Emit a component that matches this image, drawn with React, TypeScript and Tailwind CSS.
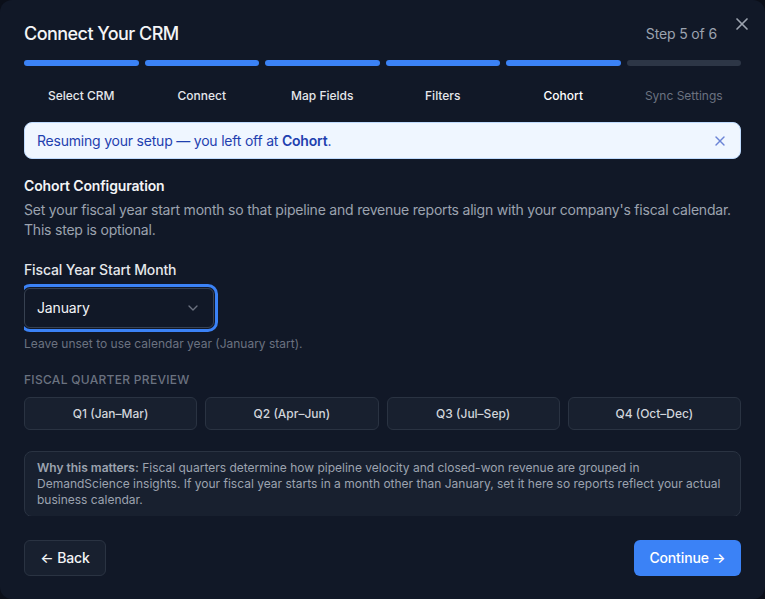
import React from "react";

const steps = [
  { label: "Select CRM", state: "done" },
  { label: "Connect", state: "done" },
  { label: "Map Fields", state: "done" },
  { label: "Filters", state: "done" },
  { label: "Cohort", state: "current" },
  { label: "Sync Settings", state: "todo" },
];

const quarters = ["Q1 (Jan–Mar)", "Q2 (Apr–Jun)", "Q3 (Jul–Sep)", "Q4 (Oct–Dec)"];

function XIcon({ size, className }: { size: number; className?: string }) {
  return (
    <svg
      width={size}
      height={size}
      viewBox="0 0 24 24"
      fill="none"
      stroke="currentColor"
      strokeWidth={2}
      strokeLinecap="round"
      strokeLinejoin="round"
      className={className}
    >
      <path d="M18 6 6 18" />
      <path d="m6 6 12 12" />
    </svg>
  );
}

export default function App() {
  return (
    <div className="w-[765px] h-[599px] bg-[#0b0f19] font-['Inter',sans-serif]">
      <div className="relative w-[765px] h-[599px] flex flex-col rounded-xl bg-[#111827]">
        <button className="absolute top-[14px] right-[13px] w-5 h-5 text-[#9ca3af]">
          <XIcon size={20} />
        </button>

        <div className="px-6 pt-5">
          <div className="flex items-center justify-between pr-6">
            <h1 className="text-[18px] leading-7 font-medium tracking-[-0.03em] text-[#f3f4f6]">Connect Your CRM</h1>
            <span className="text-sm leading-5 tracking-[-0.01em] text-[#9ca3af]">Step 5 of 6</span>
          </div>

          <div className="mt-3 flex gap-1.5">
            {steps.map((s) => (
              <div
                key={s.label}
                className={
                  s.state === "todo"
                    ? "flex-1 h-1.5 rounded-full bg-[#2d3646]"
                    : "flex-1 h-1.5 rounded-full bg-[#3b82f6]"
                }
              />
            ))}
          </div>

          <div className="mt-[22px] flex gap-1.5">
            {steps.map((s) => (
              <div
                key={s.label}
                className={
                  s.state === "todo"
                    ? "flex-1 text-center text-xs leading-4 text-[#6b7280]"
                    : s.state === "current"
                    ? "flex-1 text-center text-xs leading-4 font-medium text-white"
                    : "flex-1 text-center text-xs leading-4 font-medium text-[#e5e7eb]"
                }
              >
                {s.label}
              </div>
            ))}
          </div>
        </div>

        <div className="px-6 flex-1 min-h-0">
          <div className="overflow-y-auto h-full">
            <div className="mt-[18px] flex items-center justify-between h-[37px] rounded-lg bg-[#eff6ff] border border-[#bfdbfe] px-3">
              <p className="text-sm leading-5 tracking-[-0.015em] text-[#1e40af]">
                Resuming your setup — you left off at <span className="font-semibold">Cohort</span>.
              </p>
              <XIcon size={16} className="text-[#6b83d6]" />
            </div>

            <h2 className="mt-[17px] text-sm leading-5 font-semibold tracking-[-0.01em] text-[#f3f4f6]">
              Cohort Configuration
            </h2>
            <p className="mt-1 text-sm leading-5 tracking-[-0.015em] text-[#9ca3af]">
              Set your fiscal year start month so that pipeline and revenue reports align with your company's fiscal
              calendar. This step is optional.
            </p>

            <div className="mt-5 text-sm leading-5 font-medium tracking-[-0.01em] text-[#e5e7eb]">
              Fiscal Year Start Month
            </div>

            <div className="mt-2 w-[190px] h-10 rounded-md border border-[#374151] bg-[#111827] flex items-center justify-between pl-3 pr-3 ring-[3px] ring-[#3b82f6] ring-offset-1 ring-offset-[#111827]">
              <span className="text-sm tracking-[-0.01em] text-[#f3f4f6]">January</span>
              <svg
                width={16}
                height={16}
                viewBox="0 0 24 24"
                fill="none"
                stroke="currentColor"
                strokeWidth={2}
                strokeLinecap="round"
                strokeLinejoin="round"
                className="text-[#6b7280]"
              >
                <path d="m6 9 6 6 6-6" />
              </svg>
            </div>

            <p className="mt-2 text-xs leading-4 text-[#6b7280]">Leave unset to use calendar year (January start).</p>

            <div className="mt-5 text-xs leading-4 font-medium uppercase tracking-wide text-[#6b7280]">
              Fiscal Quarter Preview
            </div>

            <div className="mt-[9px] grid grid-cols-4 gap-2">
              {quarters.map((q) => (
                <div
                  key={q}
                  className="h-[33px] flex items-center justify-center rounded-md border border-[#2a3342] bg-[#18202f] text-xs font-medium text-[#d1d5db]"
                >
                  {q}
                </div>
              ))}
            </div>

            <div className="mt-[21px] rounded-lg border border-[#2a3342] bg-[#18202f] px-3 py-2 text-xs leading-4 text-[#9ca3af]">
              <span className="font-semibold text-[#9ca3af]">Why this matters:</span> Fiscal quarters determine how
              pipeline velocity and closed-won revenue are grouped in DemandScience insights. If your fiscal year starts
              in a month other than January, set it here so reports reflect your actual business calendar.
            </div>
          </div>
        </div>

        <div className="px-6 pt-6 pb-[23px] flex items-center justify-between">
          <button className="h-9 w-[82px] rounded-md border border-[#2a3342] bg-[#18202f] text-sm font-medium tracking-[-0.01em] text-[#f3f4f6]">
            ← Back
          </button>
          <button className="h-9 w-[107px] rounded-md bg-[#3b82f6] text-sm font-medium tracking-[-0.01em] text-white">
            Continue →
          </button>
        </div>
      </div>
    </div>
  );
}
